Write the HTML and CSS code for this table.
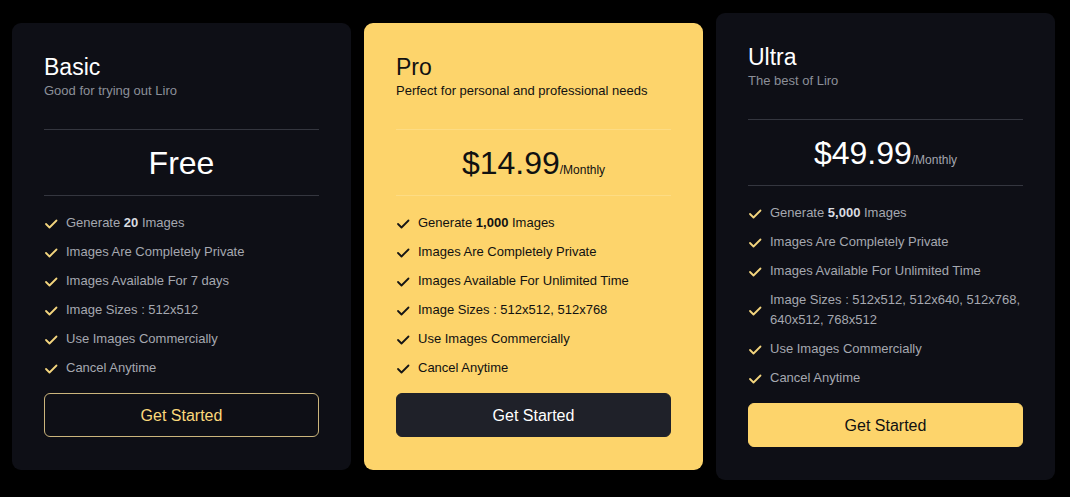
FILE: index.html
```html
<!DOCTYPE html>
<html lang="en">
<head>
<meta charset="utf-8">
<title>Liro Pricing</title>
<link rel="stylesheet" href="styles.css">
</head>
<body>
<main class="plans">
  <section class="card card-dark">
    <header class="card-head">
      <h2 class="card-title">Basic</h2>
      <p class="card-sub">Good for trying out Liro</p>
    </header>
    <div class="price"><span class="amount">Free</span></div>
    <ul class="features">
      <li><svg class="check" viewBox="0 0 16 16"><polyline points="2,9 5.5,12.5 12.5,5.5"/></svg><span>Generate <b>20</b> Images</span></li>
      <li><svg class="check" viewBox="0 0 16 16"><polyline points="2,9 5.5,12.5 12.5,5.5"/></svg><span>Images Are Completely Private</span></li>
      <li><svg class="check" viewBox="0 0 16 16"><polyline points="2,9 5.5,12.5 12.5,5.5"/></svg><span>Images Available For 7 days</span></li>
      <li><svg class="check" viewBox="0 0 16 16"><polyline points="2,9 5.5,12.5 12.5,5.5"/></svg><span>Image Sizes : 512x512</span></li>
      <li><svg class="check" viewBox="0 0 16 16"><polyline points="2,9 5.5,12.5 12.5,5.5"/></svg><span>Use Images Commercially</span></li>
      <li><svg class="check" viewBox="0 0 16 16"><polyline points="2,9 5.5,12.5 12.5,5.5"/></svg><span>Cancel Anytime</span></li>
    </ul>
    <button class="btn btn-outline">Get Started</button>
  </section>

  <section class="card card-pro">
    <header class="card-head">
      <h2 class="card-title">Pro</h2>
      <p class="card-sub">Perfect for personal and professional needs</p>
    </header>
    <div class="price"><span class="amount">$14.99</span><span class="per">/Monthly</span></div>
    <ul class="features">
      <li><svg class="check" viewBox="0 0 16 16"><polyline points="2,9 5.5,12.5 12.5,5.5"/></svg><span>Generate <b>1,000</b> Images</span></li>
      <li><svg class="check" viewBox="0 0 16 16"><polyline points="2,9 5.5,12.5 12.5,5.5"/></svg><span>Images Are Completely Private</span></li>
      <li><svg class="check" viewBox="0 0 16 16"><polyline points="2,9 5.5,12.5 12.5,5.5"/></svg><span>Images Available For Unlimited Time</span></li>
      <li><svg class="check" viewBox="0 0 16 16"><polyline points="2,9 5.5,12.5 12.5,5.5"/></svg><span>Image Sizes : 512x512, 512x768</span></li>
      <li><svg class="check" viewBox="0 0 16 16"><polyline points="2,9 5.5,12.5 12.5,5.5"/></svg><span>Use Images Commercially</span></li>
      <li><svg class="check" viewBox="0 0 16 16"><polyline points="2,9 5.5,12.5 12.5,5.5"/></svg><span>Cancel Anytime</span></li>
    </ul>
    <button class="btn btn-dark">Get Started</button>
  </section>

  <section class="card card-dark">
    <header class="card-head">
      <h2 class="card-title">Ultra</h2>
      <p class="card-sub">The best of Liro</p>
    </header>
    <div class="price"><span class="amount">$49.99</span><span class="per">/Monthly</span></div>
    <ul class="features">
      <li><svg class="check" viewBox="0 0 16 16"><polyline points="2,9 5.5,12.5 12.5,5.5"/></svg><span>Generate <b>5,000</b> Images</span></li>
      <li><svg class="check" viewBox="0 0 16 16"><polyline points="2,9 5.5,12.5 12.5,5.5"/></svg><span>Images Are Completely Private</span></li>
      <li><svg class="check" viewBox="0 0 16 16"><polyline points="2,9 5.5,12.5 12.5,5.5"/></svg><span>Images Available For Unlimited Time</span></li>
      <li><svg class="check" viewBox="0 0 16 16"><polyline points="2,9 5.5,12.5 12.5,5.5"/></svg><span>Image Sizes : 512x512, 512x640, 512x768, 640x512, 768x512</span></li>
      <li><svg class="check" viewBox="0 0 16 16"><polyline points="2,9 5.5,12.5 12.5,5.5"/></svg><span>Use Images Commercially</span></li>
      <li><svg class="check" viewBox="0 0 16 16"><polyline points="2,9 5.5,12.5 12.5,5.5"/></svg><span>Cancel Anytime</span></li>
    </ul>
    <button class="btn btn-yellow">Get Started</button>
  </section>
</main>
</body>
</html>
```
FILE: styles.css
```css
* { box-sizing: border-box; }

html, body {
  margin: 0;
  background: #000;
  font-family: "Liberation Sans", Arial, Helvetica, sans-serif;
}

.plans {
  display: flex;
  align-items: center;
  gap: 13px;
  height: 497px;
  padding: 0 0 4px 12px;
}

.card {
  flex: 0 0 339px;
  width: 339px;
  padding: 32px 32px 33px;
  border-radius: 9px;
}

.card-dark {
  background: #0e0f16;
  color: #fff;
}

.card-pro {
  background: #fdd46b;
  color: #111;
}

.card-head {
  padding-bottom: 28px;
}

.card-title {
  margin: 0;
  font-size: 23px;
  line-height: 24px;
  font-weight: 400;
}

.card-sub {
  margin: 2px 0 0;
  font-size: 13px;
  line-height: 20px;
}

.card-dark .card-sub { color: #8c8f99; }
.card-pro .card-sub { color: #111; }

.price {
  border-top: 1px solid #34363f;
  border-bottom: 1px solid #34363f;
  padding: 13px 0 12px;
  font-size: 32px;
  line-height: 40px;
  text-align: center;
}

.card-pro .price {
  border-color: #fddc84;
}

.per {
  font-size: 12px;
  line-height: 1;
}

.card-dark .per { color: #a3a6ae; }
.card-pro .per { color: #111; }

.features {
  list-style: none;
  margin: 17px 0 0;
  padding: 0;
  display: flex;
  flex-direction: column;
  gap: 9px;
}

.features li {
  display: flex;
  align-items: center;
  gap: 6px;
  font-size: 13px;
  line-height: 20px;
}

.card-dark .features li { color: #a5a8b0; }
.card-dark .features b { color: #d9dbe0; }
.card-pro .features li { color: #111; }

.check {
  flex: 0 0 16px;
  width: 16px;
  height: 16px;
  fill: none;
  stroke-width: 1.8;
  stroke-linecap: round;
  stroke-linejoin: round;
}

.card-dark .check { stroke: #f3d57e; }
.card-pro .check { stroke: #151515; }

.btn {
  display: block;
  width: 100%;
  height: 44px;
  margin-top: 15px;
  padding-top: 2px;
  border-radius: 6px;
  font-family: inherit;
  font-size: 16px;
  cursor: pointer;
}

.btn-outline {
  background: transparent;
  border: 1px solid #cbb57c;
  color: #fbd87b;
}

.btn-dark {
  background: #1f2129;
  border: 1px solid #1f2129;
  color: #fff;
}

.btn-yellow {
  background: #fdd46b;
  border: 1px solid #fdd46b;
  color: #111;
}
```
